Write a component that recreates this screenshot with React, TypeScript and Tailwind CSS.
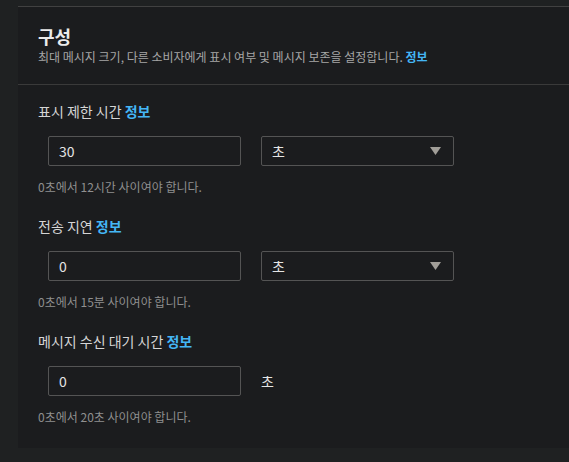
const font = "font-['Noto_Sans_CJK_KR','Noto_Sans',sans-serif]";

function Info() {
  return <span className="font-bold text-[#44b6f5]">정보</span>;
}

function Arrow() {
  return (
    <svg width="11" height="8" viewBox="0 0 11 8" className="shrink-0">
      <path d="M0 0 H11 L5.5 8 Z" fill="#a19e98" />
    </svg>
  );
}

function Field({
  label,
  value,
  hint,
  select,
  first,
}: {
  label: string;
  value: string;
  hint: string;
  select: boolean;
  first?: boolean;
}) {
  return (
    <div className={first ? "" : "mt-[21px]"}>
      <div className="text-[14px] leading-[20px] text-[#d5d5d5]">
        {label} <Info />
      </div>
      <div className="mt-[15px] ml-[10px] flex items-center gap-[20px]">
        <div className="w-[193px] h-[30px] rounded-[2px] border border-[#545454] flex items-center px-[10px] text-[14px] text-[#e4e4e4]">
          {value}
        </div>
        {select ? (
          <div className="w-[193px] h-[30px] rounded-[2px] border border-[#545454] flex items-center justify-between pl-[10px] pr-[12px] text-[14px] text-[#e4e4e4]">
            <span>초</span>
            <Arrow />
          </div>
        ) : (
          <span className="text-[14px] text-[#e4e4e4]">초</span>
        )}
      </div>
      <div className="mt-[13px] text-[12px] leading-[16px] text-[#8f8f8f]">{hint}</div>
    </div>
  );
}

export default function App() {
  return (
    <div className={`w-[569px] h-[462px] bg-[#1f2122] pt-[6px] pl-[18px] overflow-hidden ${font}`}>
      <div className="bg-[#1b1c1e] border-t border-[#414141]">
        {/* header */}
        <div className="pl-[20px] pr-[18px] pt-[16px] pb-[19px] border-b border-[#3a3a3a]">
          <h2 className="text-[18px] leading-[26px] font-bold text-[#ebebeb]">구성</h2>
          <p className="text-[12px] leading-[16px] text-[#a6a6a6]">
            최대 메시지 크기, 다른 소비자에게 표시 여부 및 메시지 보존을 설정합니다. <Info />
          </p>
        </div>

        {/* body */}
        <div className="pl-[20px] pt-[16px] pb-[23px]">
          <Field first label="표시 제한 시간" value="30" hint="0초에서 12시간 사이여야 합니다." select />
          <Field label="전송 지연" value="0" hint="0초에서 15분 사이여야 합니다." select />
          <Field label="메시지 수신 대기 시간" value="0" hint="0초에서 20초 사이여야 합니다." select={false} />
        </div>
      </div>
    </div>
  );
}
